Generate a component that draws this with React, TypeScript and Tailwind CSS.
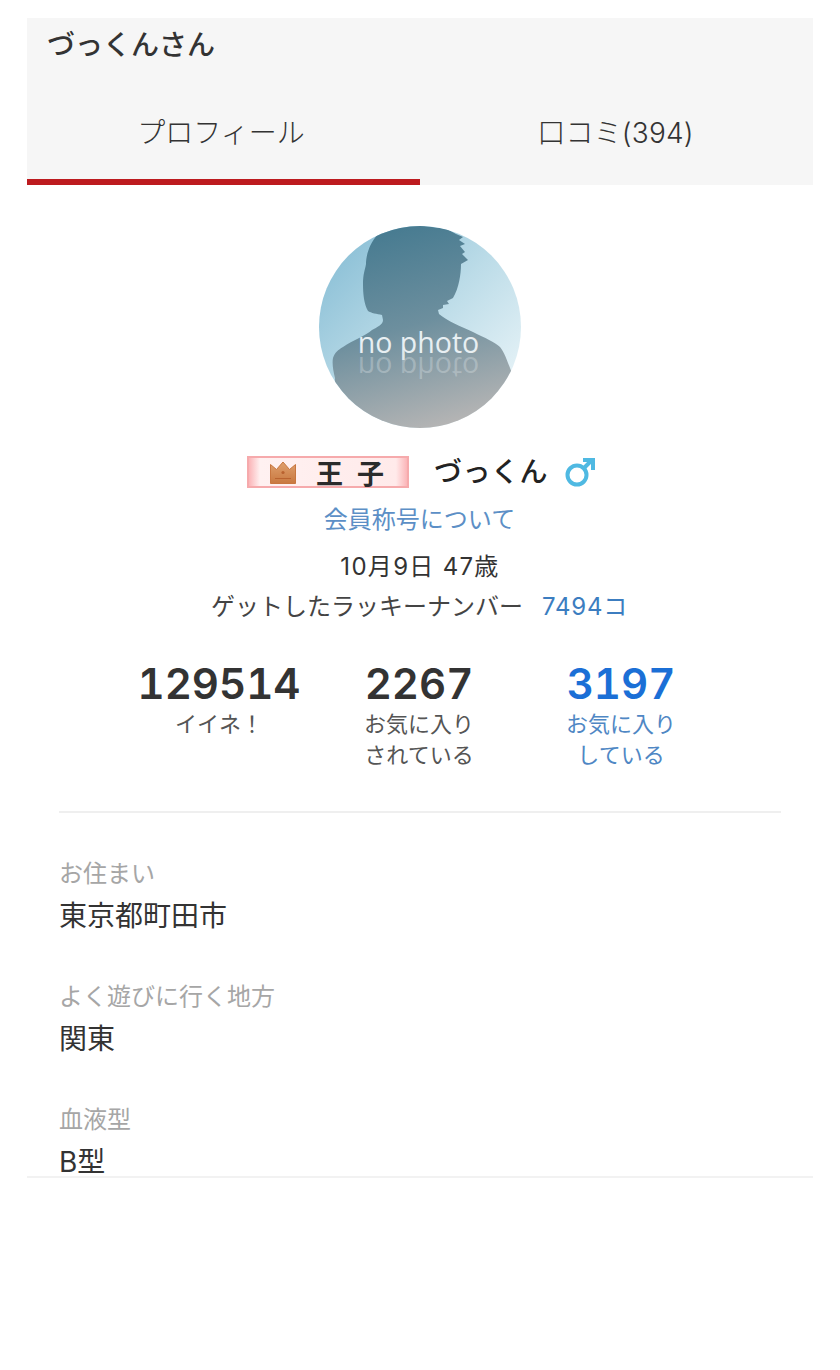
const jp = "font-['Inter','Noto_Sans_CJK_JP',sans-serif]";

function Avatar() {
  return (
    <div className="relative h-[202px] w-[202px] overflow-hidden rounded-full bg-gradient-to-br from-[#7fb9d2] via-[#bcdce8] to-[#f4fafc]">
      <svg viewBox="0 0 202 202" className="absolute inset-0 h-full w-full">
        <defs>
          <linearGradient id="figure" x1="0.3" y1="0" x2="0.55" y2="1">
            <stop offset="0" stopColor="#457a90" />
            <stop offset="0.5" stopColor="#6d8f9e" />
            <stop offset="1" stopColor="#b4b4b4" />
          </linearGradient>
        </defs>
        <path
          fill="url(#figure)"
          d="M59 8 C68 3 78 -2 90 -2 L128 3 L137 8 L144 11 L140 14 L146 18 L141 20 L146 26 L143 28 L149 34 L142 38 C142 48 140 62 134 72 L128 75 L130 78 L124 79 L124 82 L119 84 L120 88 C128 95 143 101 154 106 C166 112 176 116 181 121 C186 127 190 140 193 147 L193 202 L14 202 L16 152 C14 144 13 137 14 132 C16 126 19 124 24 121 C34 114 46 110 53 104 C58 101 64 99 64 94 L63 89 C58 88 52 87 49 85 C45 78 44 68 44 58 C44 48 46 44 47 38 C47 30 50 18 59 8 Z"
        />
      </svg>
      <div className="absolute left-0 right-0 top-[105px] pr-[3px] text-center font-['Open_Sans',sans-serif] text-[28.5px] leading-[22px] text-[#e8eff2]">
        no photo
      </div>
      <div className="absolute left-0 right-0 top-[131px] -scale-y-100 pr-[3px] text-center font-['Open_Sans',sans-serif] text-[28.5px] leading-[22px] text-[#d5dde0]/40">
        no photo
      </div>
    </div>
  );
}

function TitleBadge() {
  return (
    <div className="flex h-[32px] w-[162px] items-center border-2 border-[#f6aaac] bg-[linear-gradient(90deg,#fbb5b8_0%,#fff1f1_7%,#ffeaea_93%,#fbb5b8_100%)] pl-[20px]">
      <svg viewBox="0 0 28 24" className="h-[25px] w-[28px]">
        <defs>
          <linearGradient id="crown" x1="0" y1="0" x2="0" y2="1">
            <stop offset="0" stopColor="#dfa06e" />
            <stop offset="1" stopColor="#c9783f" />
          </linearGradient>
        </defs>
        <path
          fill="url(#crown)"
          stroke="#c8763f"
          strokeWidth="1"
          strokeLinejoin="round"
          d="M1.5 23 L1.5 4 L7.5 9 L14 1.5 L20.5 9 L26.5 4 L26.5 23 Z"
        />
        <circle cx="14" cy="12" r="1.6" fill="#b9622f" />
        <path d="M6 18 H22" stroke="#b9622f" strokeWidth="1" />
      </svg>
      <span className="ml-[19px] font-['Noto_Sans_CJK_JP',sans-serif] text-[27px] font-bold leading-none tracking-[14px] text-[#2b2b2b]">
        王子
      </span>
    </div>
  );
}

function MaleMark() {
  return (
    <svg viewBox="0 0 30 30" className="ml-[17px] h-[30px] w-[30px]" fill="none" stroke="#4fb9e2" strokeWidth="4">
      <circle cx="12" cy="18" r="9.5" />
      <path d="M19 11 L27 3 M18 3 H28 V13" />
    </svg>
  );
}

function Stat({ value, lines, blue }: { value: string; lines: string[]; blue?: boolean }) {
  return (
    <div className={`flex w-[200px] flex-col items-center ${blue ? "ml-[2px]" : ""}`}>
      <div className={`text-[42px] font-semibold leading-[50px] tabular-nums ${blue ? "text-[#1b6fd6]" : "text-[#333333]"}`}>
        {value}
      </div>
      <div className={`text-center text-[22px] leading-[31px] ${blue ? "text-[#4f87c4]" : "text-[#555555]"}`}>
        {lines.map((line) => (
          <div key={line}>{line}</div>
        ))}
      </div>
    </div>
  );
}

function Field({ label, value }: { label: string; value: string }) {
  return (
    <div className="h-[123px]">
      <div className="text-[24px] leading-[32px] text-[#a6a6a6]">{label}</div>
      <div className="mt-[10px] text-[28px] leading-[32px] text-[#333333]">{value}</div>
    </div>
  );
}

export default function App() {
  return (
    <div className={`h-[1370px] w-[840px] bg-white px-[27px] pt-[18px] ${jp}`}>
      <header className="h-[167px] bg-[#f6f6f6]">
        <h1 className="pl-[20px] pt-[9px] text-[28px] font-medium leading-[36px] text-[#333333]">づっくんさん</h1>
        <nav className="mt-[13px] flex h-[109px] text-[28px] font-light text-[#333333]">
          <div className="flex w-1/2 items-center justify-center border-b-[6px] border-[#bd1b1f] pr-[5px] pt-[11px]">プロフィール</div>
          <div className="flex w-1/2 items-center justify-center pr-[2px] pt-[5px] tracking-[0.2px]">口コミ(394)</div>
        </nav>
      </header>

      <main className="flex h-[993px] flex-col border-b-2 border-[#f2f2f2]">
        <div className="mt-[41px] flex justify-center">
          <Avatar />
        </div>

        <div className="mt-[28px] flex h-[36px] items-center justify-center pl-[2px]">
          <TitleBadge />
          <span className="ml-[25px] text-[28px] font-medium leading-none tracking-[0.5px] text-[#222222]">づっくん</span>
          <MaleMark />
        </div>

        <div className="mt-[14px] pr-[1px] text-center text-[24px] leading-[36px] text-[#5c8fc6]">会員称号について</div>
        <div className="mt-[11px] text-center text-[24px] leading-[36px] tracking-[1.3px] text-[#333333]">10月9日 47歳</div>
        <div className="mt-[3px] flex items-center justify-center pr-[1px] text-[24px] leading-[38px]">
          <span className="text-[#444444]">ゲットしたラッキーナンバー</span>
          <span className="ml-[19px] tracking-[0.8px] text-[#3c7dc0]">7494コ</span>
        </div>

        <div className="mt-[33px] flex justify-center">
          <Stat value="129514" lines={["イイネ！"]} />
          <Stat value="2267" lines={["お気に入り", "されている"]} />
          <Stat value="3197" lines={["お気に入り", "している"]} blue />
        </div>

        <div className="mx-[32px] mt-[40px] border-t-2 border-[#efefef]" />

        <div className="mt-[45px] px-[32px]">
          <Field label="お住まい" value="東京都町田市" />
          <Field label="よく遊びに行く地方" value="関東" />
          <Field label="血液型" value="B型" />
        </div>
      </main>
    </div>
  );
}
